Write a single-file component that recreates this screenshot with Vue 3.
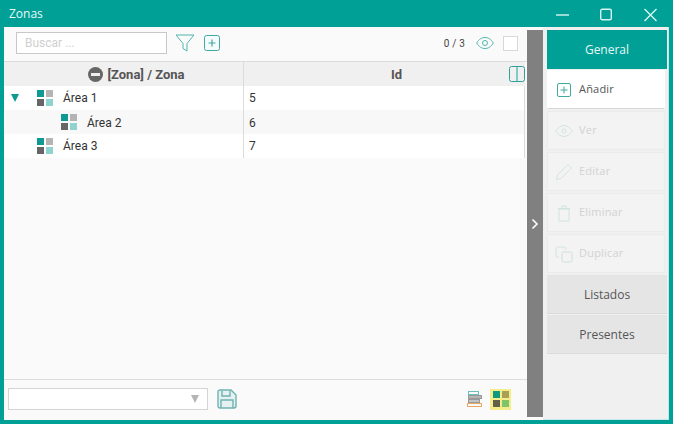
<script setup>
const rows = [
  { name: "Área 1", id: 5, child: false, open: true },
  { name: "Área 2", id: 6, child: true, open: false },
  { name: "Área 3", id: 7, child: false, open: false },
];

const actions = [
  { label: "Añadir", icon: "add", active: true },
  { label: "Ver", icon: "eye", active: false },
  { label: "Editar", icon: "edit", active: false },
  { label: "Eliminar", icon: "trash", active: false },
  { label: "Duplicar", icon: "copy", active: false },
];
</script>

<template>
  <div class="window">
    <header class="titlebar">
      <span class="title">Zonas</span>
      <div class="win-buttons">
        <svg width="14" height="14" viewBox="0 0 14 14"><path d="M0 7h13" stroke="#d8f5f2" stroke-width="1.4" fill="none" /></svg>
        <svg width="14" height="14" viewBox="0 0 14 14"><rect x="0.7" y="1.2" width="10.6" height="10.6" rx="1.5" stroke="#d8f5f2" stroke-width="1.4" fill="none" /></svg>
        <svg width="14" height="14" viewBox="0 0 14 14"><path d="M0.500 1l12 12M12.500 1l-12 12" stroke="#d8f5f2" stroke-width="1.4" fill="none" /></svg>
      </div>
    </header>

    <div class="body">
      <main class="content">
        <div class="toolbar">
          <input class="search" type="text" placeholder="Buscar ..." />
          <svg class="filter" width="20" height="20" viewBox="0 0 20 20">
            <path d="M1 2h18l-7 8.5V18l-4-2.5v-5z" stroke="#4fb5ae" stroke-width="1" fill="none" />
          </svg>
          <button class="plus-btn">
            <svg width="16" height="16" viewBox="0 0 16 16">
              <rect x="0.5" y="0.5" width="15" height="15" rx="2" stroke="#3fa9a2" fill="#f4fbfa" />
              <path d="M8 4.5v7M4.5 8h7" stroke="#3fa9a2" stroke-width="1.2" />
            </svg>
          </button>
          <span class="count">0 / 3</span>
          <svg class="eye" width="18" height="14" viewBox="0 0 18 14">
            <path d="M0.700 7C3 3 6 1.500 9 1.500S15 3 17.300 7C15 11 12 12.500 9 12.500S3 11 0.700 7z" stroke="#4fb5ae" fill="none" />
            <circle cx="9" cy="7" r="2.500" stroke="#4fb5ae" fill="none" />
          </svg>
          <span class="check"></span>
        </div>

        <div class="grid">
          <div class="grid-head">
            <div class="col-name">
              <span class="minus"></span>
              <span>[Zona] / Zona</span>
            </div>
            <div class="col-id">
              <span>Id</span>
              <svg class="columns" width="16" height="16" viewBox="0 0 16 16">
                <rect x="0.5" y="0.5" width="15" height="15" rx="2" stroke="#2f9f98" fill="none" />
                <rect x="7" y="1" width="2" height="14" fill="#7fcbc6" />
              </svg>
            </div>
          </div>

          <div v-for="(row, i) in rows" :key="row.id" class="grid-row" :class="{ odd: i % 2 === 1 }">
            <div class="cell-name" :class="{ child: row.child }">
              <span class="arrow"><i v-if="row.open"></i></span>
              <svg class="zone" width="16" height="16" viewBox="0 0 16 16">
                <rect x="0" y="0" width="7" height="7" fill="#0e9a92" />
                <rect x="9" y="0" width="7" height="7" fill="#b4b4b4" />
                <rect x="0" y="9" width="7" height="7" fill="#666666" />
                <rect x="9" y="9" width="7" height="7" fill="#8ed3cf" />
              </svg>
              <span class="name">{{ row.name }}</span>
            </div>
            <div class="cell-id">{{ row.id }}</div>
          </div>
        </div>

        <div class="footer">
          <div class="combo"><i></i></div>
          <svg class="save" width="20" height="20" viewBox="0 0 20 20">
            <path d="M1 3a2 2 0 0 1 2-2h11l5 5v11a2 2 0 0 1-2 2H3a2 2 0 0 1-2-2z" stroke="#6fb3b1" stroke-width="1.400" fill="#e4f1f0" />
            <path d="M5 1.500V7h8V1.500M4 19v-8h12v8" stroke="#6fb3b1" stroke-width="1.400" fill="none" />
          </svg>
          <div class="footer-right">
            <svg width="16" height="17" viewBox="0 0 16 17">
              <rect x="1.500" y="0.500" width="10" height="3" stroke="#6cc0ba" fill="none" />
              <rect x="1.500" y="4.500" width="13" height="3" fill="#b5b5b5" stroke="#999" />
              <rect x="1.500" y="8.500" width="11" height="3" fill="#c4c4c4" stroke="#999" />
              <rect x="0.500" y="12.500" width="14" height="3" stroke="#e8a868" fill="none" />
            </svg>
            <span class="grid-toggle">
              <svg width="16" height="16" viewBox="0 0 16 16">
                <rect x="0" y="0" width="7" height="7" fill="#0e9a80" />
                <rect x="9" y="0" width="7" height="7" fill="#a9a058" />
                <rect x="0" y="9" width="7" height="7" fill="#5f5f4c" />
                <rect x="9" y="9" width="7" height="7" fill="#7fc468" />
              </svg>
            </span>
          </div>
        </div>
      </main>

      <div class="splitter">
        <svg width="8" height="12" viewBox="0 0 8 12"><path d="M1.500 1.500L6 6l-4.500 4.500" stroke="#fff" stroke-width="1.600" fill="none" /></svg>
      </div>

      <aside class="side">
        <div class="tab-active">General</div>
        <button v-for="a in actions" :key="a.label" class="action" :class="{ active: a.active }">
          <svg width="18" height="18" viewBox="0 0 18 18" class="action-icon">
            <template v-if="a.icon === 'add'">
              <rect x="2.500" y="2.500" width="13" height="13" rx="1.500" stroke="#3fa9a2" fill="none" />
              <path d="M9 5.500v7M5.500 9h7" stroke="#3fa9a2" />
            </template>
            <template v-if="a.icon === 'eye'">
              <path d="M0.700 9C3 5.500 6 3.500 9 3.500S15 5.500 17.300 9C15 12.500 12 14.500 9 14.500S3 12.500 0.700 9z" stroke="#d3e4e2" fill="none" />
              <circle cx="9" cy="9" r="2" stroke="#d3e4e2" fill="none" />
            </template>
            <template v-if="a.icon === 'edit'">
              <path d="M1.500 16.500l1-4.500L13 1.500l3.500 3.500L6 15.500z" stroke="#d3e4e2" fill="none" />
            </template>
            <template v-if="a.icon === 'trash'">
              <path d="M4 5h10v12H4zM3 4.500h12M7 4.500V2h4v2.500" stroke="#cfe5e2" fill="none" />
            </template>
            <template v-if="a.icon === 'copy'">
              <path d="M4 12H2.500A1.500 1.500 0 0 1 1 10.500v-7A1.500 1.500 0 0 1 2.500 2H9a1.500 1.500 0 0 1 1.500 1.500V5" stroke="#d3e4e2" fill="none" />
              <rect x="7" y="7" width="10" height="10" rx="1.500" stroke="#cfe0de" fill="none" />
            </template>
          </svg>
          <span class="action-label">{{ a.label }}</span>
        </button>
        <div class="tab first">Listados</div>
        <div class="tab">Presentes</div>
      </aside>
    </div>
  </div>
</template>

<style>
html,
body {
  margin: 0;
  overflow: hidden;
}
</style>

<style scoped>
.window {
  width: 673px;
  height: 424px;
  box-sizing: border-box;
  background: #00a096;
  padding: 0 4px 4px;
  display: flex;
  flex-direction: column;
  font-family: "Open Sans", sans-serif;
}

.titlebar {
  height: 27px;
  flex: none;
  display: flex;
  align-items: center;
  justify-content: space-between;
  color: #e6f8f6;
}

.title {
  font-size: 12px;
  margin-left: 5px;
}

.win-buttons {
  display: flex;
  gap: 30px;
  margin-right: 11px;
  margin-top: 3px;
}

.body {
  flex: 1;
  display: flex;
  min-height: 0;
  background: #fafafa;
}

.content {
  width: 523px;
  display: flex;
  flex-direction: column;
  flex: none;
}

.toolbar {
  height: 35px;
  flex: none;
  box-sizing: border-box;
  border-bottom: 1px solid #dcdcdc;
  display: flex;
  align-items: center;
  padding: 0 9px 2px 12px;
}

.search {
  width: 151px;
  height: 22px;
  box-sizing: border-box;
  border: 1px solid #c8c8c8;
  background: #fff;
  padding: 0 8px;
  font-family: "Roboto", sans-serif;
  font-size: 12px;
  outline: none;
}

.search::placeholder {
  color: #cfcfcf;
}

.filter {
  margin-left: 8px;
}

.plus-btn {
  border: none;
  background: none;
  padding: 0;
  margin-left: 9px;
  display: flex;
}

.count {
  margin-left: auto;
  font-family: "Roboto", sans-serif;
  font-size: 10px;
  letter-spacing: 0.2px;
  color: #444;
}

.eye {
  margin-left: 11px;
}

.check {
  width: 15px;
  height: 15px;
  box-sizing: border-box;
  border: 1px solid #d8d8d8;
  background: #fff;
  margin-left: 9px;
}

.grid {
  flex: 1;
  margin-right: 2px;
}

.grid-head {
  height: 24px;
  display: flex;
  background: #f0f0f0;
  font-family: "Roboto", sans-serif;
  font-size: 13px;
  font-weight: 700;
  color: #555;
}

.col-name {
  width: 240px;
  box-sizing: border-box;
  border-right: 1px solid #dcdcdc;
  display: flex;
  align-items: center;
  justify-content: center;
  gap: 4px;
  padding-left: 26px;
}

.minus {
  width: 15px;
  height: 15px;
  border-radius: 50%;
  background: #666;
  position: relative;
}

.minus::after {
  content: "";
  position: absolute;
  left: 3px;
  right: 3px;
  top: 6px;
  height: 3px;
  background: #eee;
}

.col-id {
  flex: 1;
  display: flex;
  align-items: center;
  justify-content: center;
  position: relative;
  padding-left: 24px;
}

.columns {
  position: absolute;
  right: 0;
  top: 4px;
}

.grid-row {
  height: 24px;
  display: flex;
  background: #fff;
  font-family: "Roboto", sans-serif;
  font-size: 12px;
  color: #333;
}

.grid-row.odd {
  background: #f8f8f8;
}

.cell-name {
  width: 240px;
  box-sizing: border-box;
  border-right: 1px solid #dcdcdc;
  display: flex;
  align-items: center;
}

.cell-name.child {
  padding-left: 24px;
}

.arrow {
  width: 33px;
  flex: none;
  display: flex;
  padding: 0 0 1px 7px;
  box-sizing: border-box;
}

.arrow i {
  border-left: 4.500px solid transparent;
  border-right: 4.500px solid transparent;
  border-top: 8px solid #0e9a92;
}

.name {
  margin-left: 10px;
}

.grid-row.odd .name {
  padding-top: 2px;
}

.cell-id {
  flex: 1;
  box-sizing: border-box;
  border-right: 1px solid #dcdcdc;
  padding-left: 5px;
  line-height: 24px;
}

.grid-row.odd .cell-id {
  line-height: 26px;
}

.footer {
  height: 41px;
  flex: none;
  box-sizing: border-box;
  border-top: 1px solid #dcdcdc;
  display: flex;
  align-items: center;
  padding: 0 16px 2px 4px;
}

.combo {
  width: 200px;
  height: 22px;
  box-sizing: border-box;
  border: 1px solid #d4d4d4;
  background: #fff;
  display: flex;
  align-items: center;
  justify-content: flex-end;
  padding-right: 8px;
}

.combo i {
  border-left: 4.500px solid transparent;
  border-right: 4.500px solid transparent;
  border-top: 8px solid #b5b5b5;
}

.save {
  margin-left: 9px;
}

.footer-right {
  margin-left: auto;
  display: flex;
  align-items: center;
  gap: 7px;
}

.grid-toggle {
  width: 21px;
  height: 21px;
  background: #f5ec8a;
  display: flex;
  align-items: center;
  justify-content: center;
}

.splitter {
  width: 16px;
  flex: none;
  margin-top: 3px;
  margin-bottom: 3px;
  background: #808080;
  display: flex;
  align-items: center;
  justify-content: center;
}

.side {
  flex: 1;
  background: #f0f0f0;
  padding: 3px 0 0 4px;
  display: flex;
  flex-direction: column;
  border-right: 1px solid #bfe9e6;
  border-bottom: 1px solid #bfe9e6;
}

.tab-active {
  height: 39px;
  width: 120px;
  flex: none;
  background: #00a096;
  color: #e6f8f6;
  font-size: 12px;
  display: flex;
  align-items: center;
  justify-content: center;
}

.action {
  width: 118px;
  height: 39px;
  flex: none;
  margin-top: 2px;
  box-sizing: border-box;
  border: 1px solid #ebebeb;
  background: #f3f3f3;
  display: flex;
  align-items: center;
  padding: 0 0 0 8px;
  font-family: "Open Sans", sans-serif;
  font-size: 11px;
  letter-spacing: 0.2px;
  color: #d2d2d2;
}

.action:first-of-type {
  margin-top: 1px;
}

.action.active {
  background: #fff;
  color: #555;
  border-color: #fff #fff #d8d8d8 #fff;
}

.action-icon {
  margin-right: 6px;
  margin-left: -1px;
}

.action-label {
  padding-bottom: 2px;
}

.tab {
  width: 120px;
  height: 39px;
  flex: none;
  background: #e5e5e5;
  border-bottom: 1px solid #dadada;
  box-sizing: border-box;
  display: flex;
  align-items: center;
  justify-content: center;
  font-size: 12px;
  color: #555;
  margin-top: 1px;
}

.tab.first {
  margin-top: 2px;
}
</style>
